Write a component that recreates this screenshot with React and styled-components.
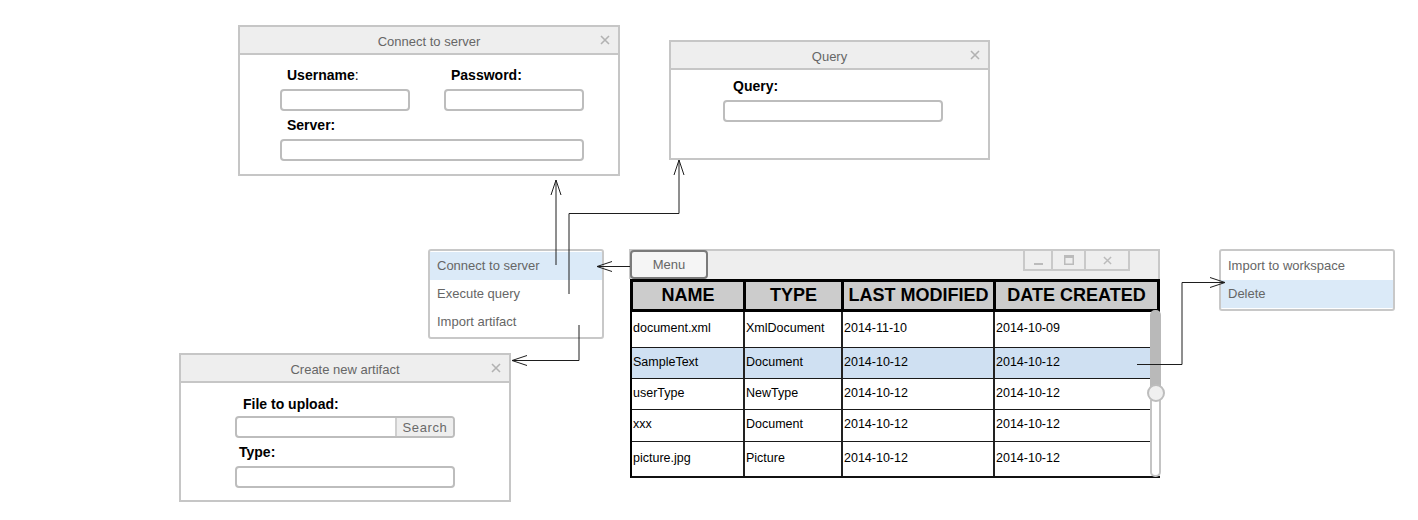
import React from 'react';
import styled, { createGlobalStyle } from 'styled-components';

const GlobalStyle = createGlobalStyle`
  html, body {
    margin: 0;
    padding: 0;
    background: #fff;
  }
  body {
    font-family: "Liberation Sans", Arial, sans-serif;
  }
  * {
    box-sizing: border-box;
  }
`;

const Canvas = styled.div`
  position: relative;
  width: 1418px;
  height: 520px;
  overflow: hidden;
  background: #fff;
`;

/* ---------- dialogs ---------- */

const Dialog = styled.div`
  position: absolute;
  left: ${p => p.$x}px;
  top: ${p => p.$y}px;
  width: ${p => p.$w}px;
  height: ${p => p.$h}px;
  border: 2px solid #c6c6c6;
  background: #fff;
  display: flex;
  flex-direction: column;
`;

const DialogTitle = styled.div`
  position: relative;
  flex: 0 0 28px;
  background: #eee;
  border-bottom: 2px solid #c6c6c6;
  display: flex;
  align-items: center;
  justify-content: center;
  padding-top: 2px;
  font-size: 13px;
  color: #666;
`;

const CloseButton = styled.span`
  position: absolute;
  right: 8px;
  top: 50%;
  transform: translateY(-50%);
  display: flex;
`;

const ConnectForm = styled.div`
  display: grid;
  grid-template-columns: 130px 140px;
  grid-template-rows: 16px 22px 16px 22px;
  column-gap: 34px;
  row-gap: 6px;
  padding: 12px 0 0 40px;
`;

const FormStack = styled.div`
  display: flex;
  flex-direction: column;
  align-items: flex-start;
  padding: ${p => p.$top}px 0 0 ${p => p.$left}px;
`;

const Label = styled.div`
  font-size: 14px;
  font-weight: bold;
  line-height: 16px;
  color: #000;
  padding-left: ${p => p.$indent ?? 7}px;
  margin-top: ${p => p.$mt || 0}px;
  grid-column: ${p => (p.$span ? '1 / -1' : 'auto')};
`;

const Plain = styled.span`
  font-weight: normal;
`;

const Field = styled.div`
  display: flex;
  height: 22px;
  width: ${p => (p.$w ? `${p.$w}px` : 'auto')};
  margin-top: ${p => p.$mt || 0}px;
  border: 2px solid #bdbdbd;
  border-radius: 4px;
  background: #fff;
  overflow: hidden;
  grid-column: ${p => (p.$span ? '1 / -1' : 'auto')};
`;

const SearchButton = styled.div`
  margin-left: auto;
  width: 58px;
  background: #eee;
  border-left: 2px solid #cfcfcf;
  display: flex;
  align-items: center;
  justify-content: center;
  font-size: 13px;
  letter-spacing: 0.6px;
  color: #6a6a6a;
`;

/* ---------- popup menus ---------- */

const PopupMenu = styled.div`
  position: absolute;
  left: ${p => p.$x}px;
  top: ${p => p.$y}px;
  width: 176px;
  border: 2px solid #c8c8c8;
  border-radius: 3px;
  background: #fff;
  padding: 1px 0;
`;

const MenuItem = styled.div`
  height: 28px;
  line-height: 28px;
  padding-left: 7px;
  font-size: 13px;
  color: #666;
  background: ${p => (p.$active ? '#dbeaf8' : 'transparent')};
`;

/* ---------- main window ---------- */

const AppWindow = styled.div`
  position: absolute;
  left: 629px;
  top: 249px;
  width: 531px;
`;

const AppTitleBar = styled.div`
  height: 30px;
  background: #eee;
  border: 2px solid #c8c8c8;
  border-bottom: none;
  display: flex;
  align-items: flex-start;
`;

const MenuButton = styled.div`
  width: 78px;
  height: 29px;
  margin: -1px 0 0 -1px;
  border: 2px solid #7a7a7a;
  border-radius: 4px;
  background: #f5f5f5;
  display: flex;
  align-items: center;
  justify-content: center;
  font-size: 13px;
  color: #666;
`;

const WindowControls = styled.div`
  display: flex;
  height: 22px;
  margin: -2px 28px 0 auto;
  border: 2px solid #c9c9c9;
  background: #eee;
`;

const ControlButton = styled.div`
  width: ${p => p.$w}px;
  display: flex;
  align-items: center;
  justify-content: center;
  & + & {
    border-left: 2px solid #c9c9c9;
  }
`;

const Grid = styled.div`
  margin-left: 1px;
  width: 530px;
`;

const HeaderRow = styled.div`
  display: grid;
  grid-template-columns: 110px 98px 152px 1fr;
  height: 33px;
  border: 3px solid #000;
`;

const HeaderCell = styled.div`
  background: #ccc;
  display: flex;
  align-items: center;
  justify-content: center;
  font-size: 18px;
  font-weight: bold;
  color: #000;
  & + & {
    border-left: 3px solid #000;
  }
`;

const Body = styled.div`
  position: relative;
  border-left: 2px solid #000;
  border-bottom: 2px solid #111;
`;

const Row = styled.div`
  display: grid;
  grid-template-columns: 111px 98px 152px 1fr;
  height: ${p => p.$h}px;
  background: ${p => (p.$selected ? '#cfe0f2' : '#fff')};
  border-bottom: ${p => (p.$last ? 'none' : '1px solid #1a1a1a')};
`;

const Cell = styled.div`
  display: flex;
  align-items: center;
  padding: 0 0 3px 1px;
  font-size: 12.5px;
  color: #000;
  white-space: nowrap;
  & + & {
    border-left: 2px solid #222;
  }
`;

const Slider = styled.div`
  position: absolute;
  right: -1px;
  top: -2px;
  width: 11px;
  height: 167px;
  display: flex;
  flex-direction: column;
  align-items: center;
`;

const SliderFill = styled.div`
  flex: 0 0 78px;
  width: 11px;
  background: #b9b9b9;
  border-radius: 5px 5px 0 0;
`;

const SliderKnob = styled.div`
  flex: 0 0 18px;
  width: 18px;
  margin: -4px 0 -2px;
  border-radius: 50%;
  background: #f0f0f0;
  border: 2px solid #bdbdbd;
  position: relative;
  z-index: 1;
`;

const SliderTrack = styled.div`
  flex: 1;
  width: 11px;
  background: #fff;
  border: 2px solid #c4c4c4;
  border-top: none;
  border-radius: 0 0 5px 5px;
`;

const Connectors = styled.svg`
  position: absolute;
  left: 0;
  top: 0;
  z-index: 5;
  pointer-events: none;
`;

/* ---------- drawings ---------- */

const CloseGlyph = ({ size = 10, color = '#b2b2b2' }) => (
  <svg width={size} height={size} viewBox="0 0 10 10">
    <path d="M1 1L9 9M9 1L1 9" stroke={color} strokeWidth="1.6" fill="none" />
  </svg>
);

const MinimizeGlyph = () => (
  <svg width="9" height="9" viewBox="0 0 9 9">
    <path d="M0 8h9" stroke="#bbb" strokeWidth="2" fill="none" />
  </svg>
);

const MaximizeGlyph = () => (
  <svg width="10" height="10" viewBox="0 0 10 10">
    <rect x="0.75" y="0.75" width="8.5" height="8.5" stroke="#bbb" strokeWidth="1.5" fill="none" />
    <path d="M0 2h10" stroke="#bbb" strokeWidth="2" />
  </svg>
);

const Arrow = ({ points }) => {
  const [x1, y1] = points[points.length - 2];
  const [x2, y2] = points[points.length - 1];
  const a = Math.atan2(y2 - y1, x2 - x1);
  const bx = x2 - 15 * Math.cos(a);
  const by = y2 - 15 * Math.sin(a);
  const px = -Math.sin(a) * 5;
  const py = Math.cos(a) * 5;
  return (
    <g stroke="#1e1e1e" strokeWidth="1" fill="none">
      <polyline points={points.map(p => p.join(',')).join(' ')} />
      <polyline points={`${bx + px},${by + py} ${x2},${y2} ${bx - px},${by - py}`} />
    </g>
  );
};

const files = [
  { name: 'document.xml', type: 'XmlDocument', modified: '2014-11-10', created: '2014-10-09', h: 36 },
  { name: 'SampleText', type: 'Document', modified: '2014-10-12', created: '2014-10-12', h: 31, selected: true },
  { name: 'userType', type: 'NewType', modified: '2014-10-12', created: '2014-10-12', h: 31 },
  { name: 'xxx', type: 'Document', modified: '2014-10-12', created: '2014-10-12', h: 32 },
  { name: 'picture.jpg', type: 'Picture', modified: '2014-10-12', created: '2014-10-12', h: 34 },
];

const links = [
  [[630, 266.5], [597, 266.5]],
  [[556, 265], [556, 180]],
  [[569, 294], [569, 213.5], [679, 213.5], [679, 160]],
  [[579, 325], [579, 360.5], [512, 360.5]],
  [[1137, 364.5], [1182, 364.5], [1182, 282.5], [1225, 282.5]],
];

const App = () => (
  <Canvas>
    <GlobalStyle />

    <Dialog $x={238} $y={25} $w={382} $h={151}>
      <DialogTitle>
        Connect to server
        <CloseButton><CloseGlyph /></CloseButton>
      </DialogTitle>
      <ConnectForm>
        <Label>Username<Plain>:</Plain></Label>
        <Label>Password:</Label>
        <Field />
        <Field />
        <Label $span>Server:</Label>
        <Field $span />
      </ConnectForm>
    </Dialog>

    <Dialog $x={669} $y={40} $w={321} $h={120}>
      <DialogTitle>
        Query
        <CloseButton><CloseGlyph /></CloseButton>
      </DialogTitle>
      <FormStack $top={8} $left={52}>
        <Label $indent={10}>Query:</Label>
        <Field $w={220} $mt={6} />
      </FormStack>
    </Dialog>

    <Dialog $x={179} $y={353} $w={332} $h={149}>
      <DialogTitle>
        Create new artifact
        <CloseButton><CloseGlyph /></CloseButton>
      </DialogTitle>
      <FormStack $top={13} $left={54}>
        <Label $indent={8}>File to upload:</Label>
        <Field $w={220} $mt={4}>
          <SearchButton>Search</SearchButton>
        </Field>
        <Label $indent={4} $mt={6}>Type:</Label>
        <Field $w={220} $mt={6} />
      </FormStack>
    </Dialog>

    <PopupMenu $x={428} $y={249}>
      <MenuItem $active>Connect to server</MenuItem>
      <MenuItem>Execute query</MenuItem>
      <MenuItem>Import artifact</MenuItem>
    </PopupMenu>

    <AppWindow>
      <AppTitleBar>
        <MenuButton>Menu</MenuButton>
        <WindowControls>
          <ControlButton $w={26}><MinimizeGlyph /></ControlButton>
          <ControlButton $w={33}><MaximizeGlyph /></ControlButton>
          <ControlButton $w={44}><CloseGlyph size={9} color="#bbb" /></ControlButton>
        </WindowControls>
      </AppTitleBar>
      <Grid>
        <HeaderRow>
          <HeaderCell>NAME</HeaderCell>
          <HeaderCell>TYPE</HeaderCell>
          <HeaderCell>LAST MODIFIED</HeaderCell>
          <HeaderCell>DATE CREATED</HeaderCell>
        </HeaderRow>
        <Body>
          {files.map((f, i) => (
            <Row key={f.name} $h={f.h} $selected={f.selected} $last={i === files.length - 1}>
              <Cell>{f.name}</Cell>
              <Cell>{f.type}</Cell>
              <Cell>{f.modified}</Cell>
              <Cell>{f.created}</Cell>
            </Row>
          ))}
          <Slider>
            <SliderFill />
            <SliderKnob />
            <SliderTrack />
          </Slider>
        </Body>
      </Grid>
    </AppWindow>

    <PopupMenu $x={1219} $y={249}>
      <MenuItem>Import to workspace</MenuItem>
      <MenuItem $active>Delete</MenuItem>
    </PopupMenu>

    <Connectors width="1418" height="520" viewBox="0 0 1418 520">
      {links.map((pts, i) => (
        <Arrow key={i} points={pts} />
      ))}
    </Connectors>
  </Canvas>
);

export default App;
